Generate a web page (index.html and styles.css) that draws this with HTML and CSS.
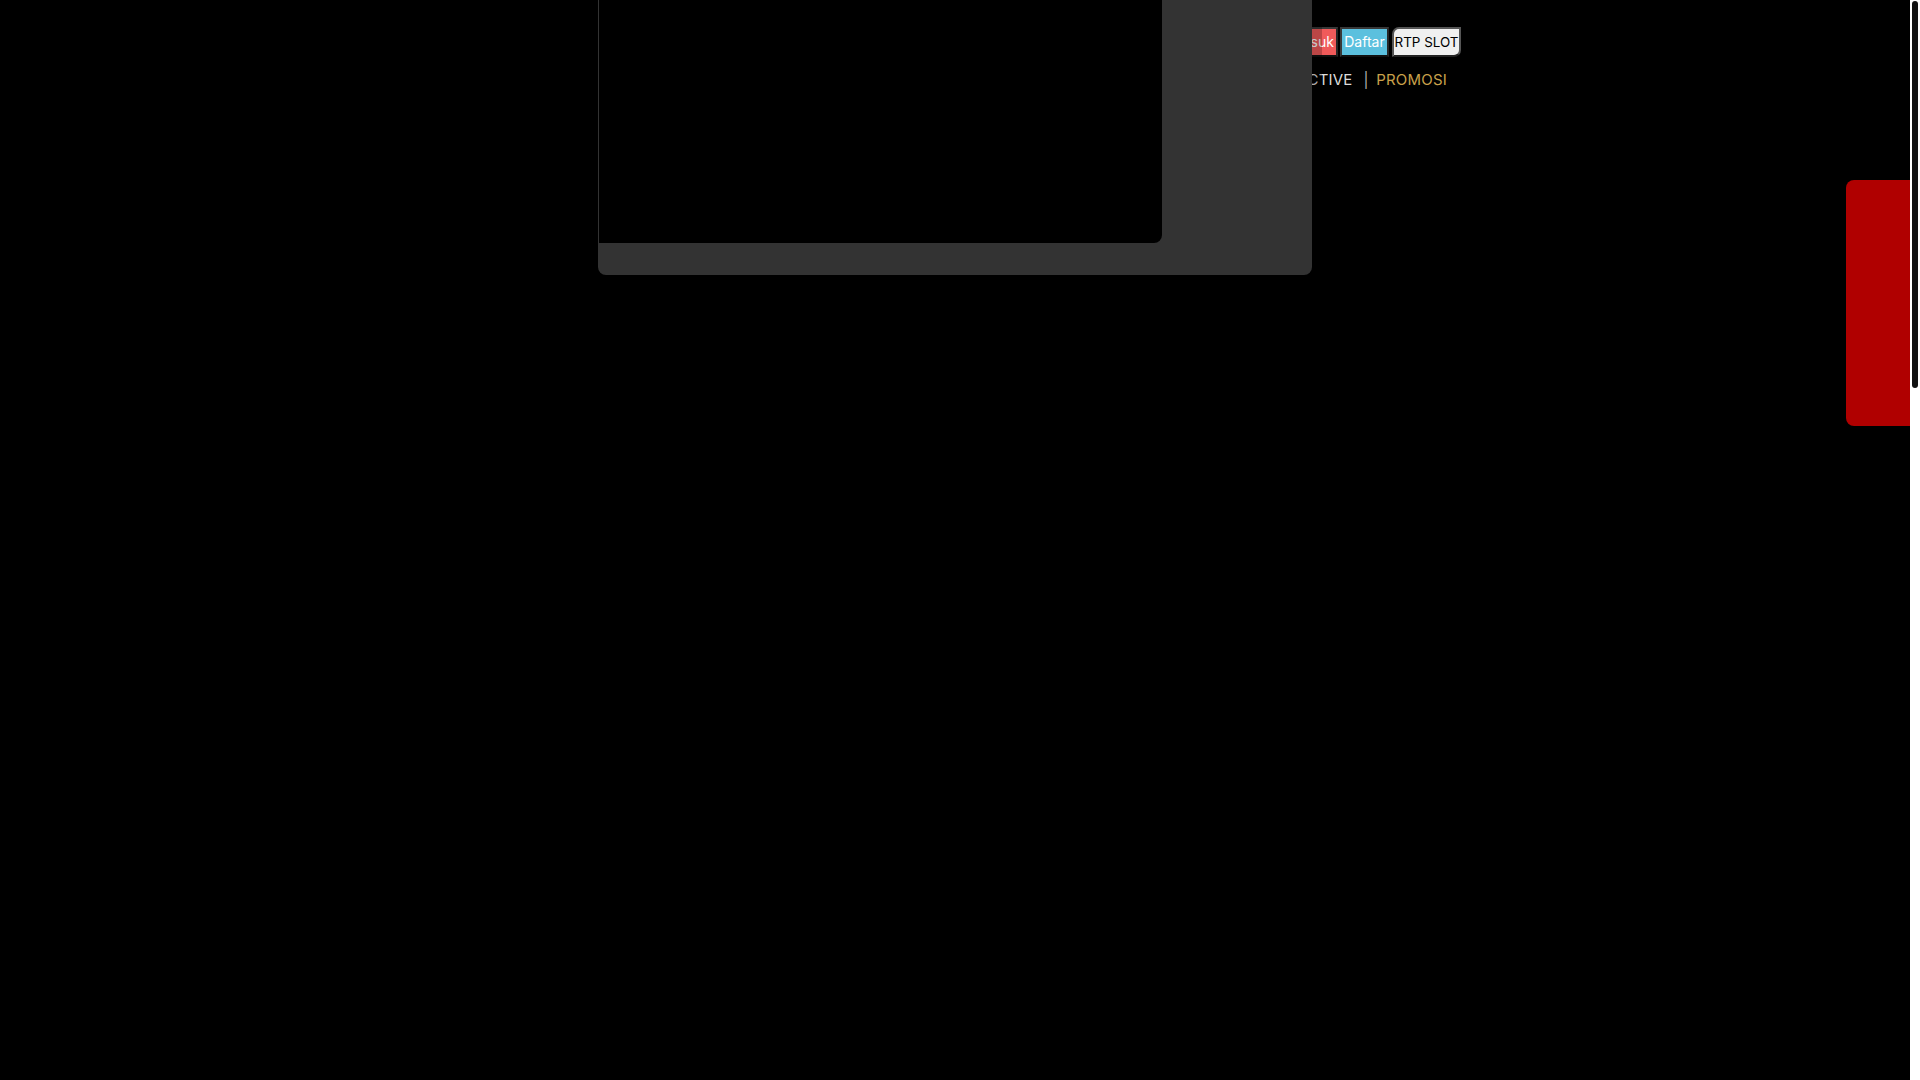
FILE: index.html
```html
<!DOCTYPE html>
<html lang="id">
<head>
<meta charset="utf-8">
<title>RTP SLOT</title>
<link rel="stylesheet" href="styles.css">
</head>
<body>
<div class="viewport">
  <div class="page">
    <header class="header">
      <div class="auth">
        <button class="btn btn-login">Masuk</button>
        <button class="btn btn-register">Daftar</button>
        <button class="btn btn-rtp">RTP SLOT</button>
      </div>
      <nav class="nav">
        <a class="nav-link">HOME</a><span class="sep">|</span>
        <a class="nav-link">SLOT</a><span class="sep">|</span>
        <a class="nav-link">CASINO</a><span class="sep">|</span>
        <a class="nav-link">INTERACTIVE</a><span class="sep">|</span>
        <a class="nav-link nav-promo">PROMOSI</a>
      </nav>
    </header>
    <div class="popup">
      <div class="popup-screen"></div>
    </div>
    <aside class="side-tab"></aside>
  </div>
  <div class="scrollbar"><div class="thumb"></div></div>
</div>
</body>
</html>
```

FILE: styles.css
```css
html, body {
  margin: 0;
  padding: 0;
  height: 100%;
  overflow: hidden;
  background: #000;
  font-family: Inter, "Liberation Sans", sans-serif;
}

.viewport {
  display: flex;
  height: 100vh;
}

.page {
  flex: 1;
  position: relative;
  overflow: hidden;
  background: #000;
}

.scrollbar {
  width: 10px;
  background: #fff;
  padding: 1px 2px;
  box-sizing: border-box;
}

.thumb {
  height: 387px;
  background: #111;
  border-radius: 3px;
}

.header {
  width: 1012px;
  margin: 0 auto;
  padding-top: 27px;
}

.auth {
  display: flex;
  justify-content: flex-end;
  gap: 2px;
}

.btn {
  height: 30px;
  box-sizing: border-box;
  padding: 0;
  margin: 0;
  font-family: Inter, "Liberation Sans", sans-serif;
  font-size: 14px;
  font-weight: 400;
  line-height: 26px;
  text-align: center;
  white-space: nowrap;
  overflow: hidden;
  border-style: solid;
  border-width: 2px;
  border-color: #383838 #262626 #111 #383838;
  cursor: pointer;
}

.btn-login {
  background: #f05a5a;
  color: #fff;
  width: 52px;
}

.btn-register {
  background: #5bc0de;
  color: #fff;
  width: 49px;
}

.btn-rtp {
  background: #f0f0f0;
  color: #000;
  margin-left: 1px;
  width: 69px;
  font-size: 13.4px;
  border-color: #555 #555 #222 #555;
  border-radius: 7px 0 7px 0;
}

.nav {
  margin-top: 13px;
  padding-right: 14px;
  text-align: right;
  font-size: 15px;
  line-height: 20px;
  color: #dcdcdc;
  letter-spacing: 0.2px;
  white-space: nowrap;
}

.nav-link {
  color: #dcdcdc;
}

.nav-promo {
  color: #c9a14a;
}

.sep {
  color: #b0b0b0;
  margin: 0 3px 0 11px;
}

.popup {
  position: absolute;
  top: 0;
  left: 50%;
  margin-left: -357px;
  width: 714px;
  height: 275px;
  background: #333;
  border-radius: 0 0 8px 8px;
  box-shadow: 10px 0 0 rgba(0, 0, 0, 0.22);
}

.popup-screen {
  margin-left: 1px;
  width: 563px;
  height: 243px;
  background: #000;
  border-bottom-right-radius: 8px;
}

.side-tab {
  position: absolute;
  right: 0;
  top: 180px;
  width: 64px;
  height: 246px;
  background: #b00000;
  border-radius: 8px 0 0 8px;
}
```
